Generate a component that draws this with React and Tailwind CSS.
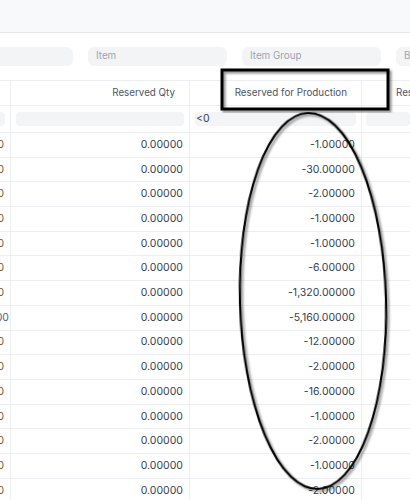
const rows = [
  ['-1.00000', '0'],
  ['-30.00000', '0'],
  ['-2.00000', '0'],
  ['-1.00000', '0'],
  ['-1.00000', '0'],
  ['-6.00000', '0'],
  ['-1,320.00000', '0'],
  ['-5,160.00000', '00'],
  ['-12.00000', '0'],
  ['-2.00000', '0'],
  ['-16.00000', '0'],
  ['-1.00000', '0'],
  ['-2.00000', '0'],
  ['-1.00000', '0'],
  ['-2.00000', '0'],
]

export default function App() {
  return (
    <div className="relative w-[410px] h-[500px] overflow-hidden bg-white text-[10.5px] text-[#374151]" style={{ fontFamily: 'Inter, "Noto Sans", sans-serif' }}>
      <div className="h-[33px] bg-[#f8f9fa] border-b border-[#e5e7eb]" />

      <div className="flex gap-[15px] mt-[14px] ml-[-60px] h-[19px] text-[9.8px]">
        <div className="w-[133px] shrink-0 rounded-md bg-[#f3f4f6]" />
        <div className="w-[139px] shrink-0 rounded-md bg-[#f3f4f6] flex items-center px-2 text-[#9ca3af]">Item</div>
        <div className="w-[139px] shrink-0 rounded-md bg-[#f3f4f6] flex items-center px-2 text-[#9ca3af]">Item Group</div>
        <div className="w-[139px] shrink-0 rounded-md bg-[#f3f4f6] flex items-center px-2 text-[#9ca3af]">B</div>
      </div>

      <div className="mt-[14px] border-t border-[#eceef1]">
        <div className="flex h-[25px] border-b border-[#eceef1] text-[#4b5563] text-[9.8px]">
          <div className="w-[11px] shrink-0 border-r border-[#eceef1]" />
          <div className="w-[179px] shrink-0 border-r border-[#eceef1] flex items-center justify-end pr-[14px]">Reserved Qty</div>
          <div className="w-[172px] shrink-0 border-r border-[#eceef1] flex items-center justify-end pr-[14px]">Reserved for Production</div>
          <div className="flex-1 flex items-center pl-[34px] whitespace-nowrap">Res</div>
        </div>

        <div className="flex h-[27px] border-b border-[#eceef1]">
          <div className="w-[11px] shrink-0 border-r border-[#eceef1] flex items-center">
            <div className="w-[5px] h-[14px] rounded-r bg-[#f3f4f6]" />
          </div>
          <div className="w-[179px] shrink-0 border-r border-[#eceef1] flex items-center px-[5px]">
            <div className="w-full h-[14px] rounded bg-[#f3f4f6]" />
          </div>
          <div className="w-[172px] shrink-0 border-r border-[#eceef1] flex items-center px-[5px]">
            <div className="w-full h-[14px] rounded bg-[#f3f4f6] flex items-center px-[1px] text-[#374151]">&lt;0</div>
          </div>
          <div className="flex-1 flex items-center pl-[4px]">
            <div className="w-full h-[14px] rounded bg-[#f3f4f6]" />
          </div>
        </div>

        {rows.map((r, i) => (
          <div key={i} className="flex h-[24.7px] border-b border-[#eceef1]">
            <div className={`w-[11px] shrink-0 border-r border-[#eceef1] flex items-center justify-end overflow-hidden ${r[1] === '00' ? 'text-[#4a6388] pr-[1px]' : 'text-[#7a5a2a] pr-[6px]'}`}>{r[1]}</div>
            <div className="w-[179px] shrink-0 border-r border-[#eceef1] flex items-center justify-end pr-[6px]">0.00000</div>
            <div className="w-[172px] shrink-0 border-r border-[#eceef1] flex items-center justify-end pr-[6px]">{r[0]}</div>
            <div className="flex-1" />
          </div>
        ))}
      </div>

      <svg className="absolute inset-0 pointer-events-none" width="410" height="500" viewBox="0 0 410 500">
        <defs>
          <filter id="sh" x="-10%" y="-10%" width="120%" height="120%">
            <feDropShadow dx="2" dy="2" stdDeviation="1.2" floodColor="#000" floodOpacity="0.45" />
          </filter>
        </defs>
        <rect x="222" y="70" width="166" height="39" fill="none" stroke="#000" strokeWidth="3" filter="url(#sh)" />
        <ellipse cx="313" cy="301" rx="73" ry="188" fill="none" stroke="#000" strokeWidth="2.2" transform="rotate(-1.5 313 301)" filter="url(#sh)" />
      </svg>
    </div>
  )
}
